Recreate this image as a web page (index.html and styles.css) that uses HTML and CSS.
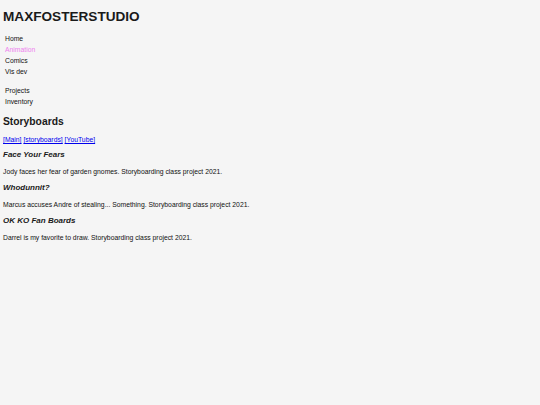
FILE: index.html
```html
<!DOCTYPE html>
<html lang="en">
<head>
    <meta charset="UTF-8">
    <meta name="viewport" content="width=device-width, initial-scale=1.0">
    <title>MAXFOSTERSTUDIO - Storyboards</title>
    <link rel="stylesheet" href="styles.css">
</head>
<body>
    <header>
        <h1 class="site-title">MAXFOSTERSTUDIO</h1>
    </header>

    <nav class="site-nav">
        <ul class="nav-group">
            <li><a href="#">Home</a></li>
            <li><a href="#" class="active">Animation</a></li>
            <li><a href="#">Comics</a></li>
            <li><a href="#">Vis dev</a></li>
        </ul>
        <ul class="nav-group">
            <li><a href="#">Projects</a></li>
            <li><a href="#">Inventory</a></li>
        </ul>
    </nav>

    <main>
        <h2 class="page-title">Storyboards</h2>
        <p class="sub-links">
            <a href="#">[Main]</a> <a href="#">[storyboards]</a> <a href="#">[YouTube]</a>
        </p>

        <h3 class="board-title">Face Your Fears</h3>
        <p class="board-desc">Jody faces her fear of garden gnomes. Storyboarding class project 2021.</p>

        <h3 class="board-title">Whodunnit?</h3>
        <p class="board-desc">Marcus accuses Andre of stealing... Something. Storyboarding class project 2021.</p>

        <h3 class="board-title">OK KO Fan Boards</h3>
        <p class="board-desc">Darrel is my favorite to draw. Storyboarding class project 2021.</p>
    </main>
</body>
</html>
```

FILE: styles.css
```css
:root {
    --text-color: #111;
    --bg-color: #f5f5f5;
    --accent: #ee82ee;
    --link: #0000ee;
}

body {
    font-family: "Liberation Sans", Arial, sans-serif;
    font-size: 6.8px;
    margin: 0;
    padding: 0 3px;
    background-color: var(--bg-color);
    color: var(--text-color);
}

.site-title {
    font-size: 13.6px;
    line-height: 16px;
    margin: 9px 0 0;
    color: #1a1a1a;
}

.site-nav {
    margin-top: 7.5px;
    padding-left: 2px;
}

.nav-group {
    list-style: none;
    margin: 0 0 8px;
    padding: 0;
}

.nav-group li {
    line-height: 11px;
}

.nav-group a {
    color: var(--text-color);
    text-decoration: none;
}

.nav-group a.active {
    color: var(--accent);
}

.page-title {
    font-size: 10.3px;
    line-height: 12px;
    margin: 9px 0 7.5px;
    color: #1a1a1a;
}

.sub-links {
    line-height: 9px;
    margin: 0 0 6px;
}

.sub-links a {
    color: var(--link);
}

.board-title {
    font-size: 8px;
    font-style: italic;
    line-height: 10px;
    margin: 0 0 6.5px;
    color: #1a1a1a;
}

.board-desc {
    line-height: 9px;
    margin: 0 0 7.5px;
}
```
